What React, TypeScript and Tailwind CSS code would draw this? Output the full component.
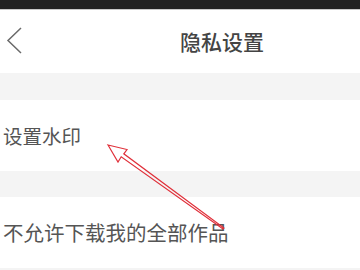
import React from "react";

const font = { fontFamily: '"Noto Sans CJK SC", "Noto Sans", sans-serif' };

export default function App() {
  return (
    <div className="relative w-[360px] h-[270px] overflow-hidden bg-[#f4f4f4]" style={font}>
      {/* status bar */}
      <div className="h-[10px] bg-[#222222] border-b border-[#c9c9c9]" />

      {/* header */}
      <div className="relative h-[63px] bg-white flex items-center justify-center pl-[84px]">
        <svg className="absolute left-0 top-0" width="30" height="63" viewBox="0 0 30 63">
          <polyline points="21,18 8,30.5 21,43" fill="none" stroke="#6a6a6a" strokeWidth="1.5" />
        </svg>
        <span className="text-[21px] leading-none font-medium text-[#444444]">隐私设置</span>
      </div>

      <div className="h-[27px]" />

      <div className="h-[71px] bg-white flex items-center pl-[3px]">
        <span className="text-[19.5px] leading-none text-[#555555]">设置水印</span>
      </div>

      <div className="h-[26px]" />

      <div className="h-[71px] bg-white flex items-center pl-[3px]">
        <span className="text-[20.5px] leading-none text-[#555555]">不允许下载我的全部作品</span>
      </div>

      {/* annotation arrow */}
      <svg className="absolute left-0 top-0 pointer-events-none" width="360" height="270" viewBox="0 0 360 270">
        <polygon
          points="108,145 127,149.5 123.8,153.8 224,228 223,229 121.2,156.8 118,162"
          fill="none"
          stroke="#e0303a"
          strokeWidth="1.2"
          strokeLinejoin="miter"
        />
      </svg>
    </div>
  );
}
